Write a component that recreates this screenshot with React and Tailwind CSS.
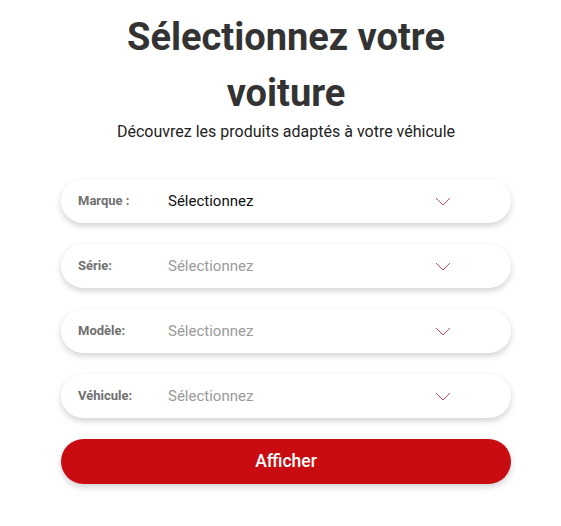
import React from 'react';

const fields = [
  { label: 'Marque :', value: 'Sélectionnez', active: true },
  { label: 'Série:', value: 'Sélectionnez' },
  { label: 'Modèle:', value: 'Sélectionnez' },
  { label: 'Véhicule:', value: 'Sélectionnez' },
];

const Chevron = () => (
  <svg width="16" height="9" viewBox="0 0 16 9" fill="none" className="shrink-0">
    <path d="M1 1l7 7 7-7" stroke="#c8364f" strokeWidth="0.9" />
  </svg>
);

export default function App() {
  return (
    <div className="min-h-[526px] bg-white" style={{ fontFamily: 'Roboto, "Liberation Sans", sans-serif' }}>
      <div className="ml-[61px] w-[450px] pt-[9px]">
        <h1 className="mx-auto w-[340px] text-center text-[38px] font-bold leading-[56px] text-[#333333]">
          Sélectionnez votre voiture
        </h1>
        <p className="text-center text-[16px] leading-[22px] text-[#222222]">
          Découvrez les produits adaptés à votre véhicule
        </p>

        <div className="mt-[36px] flex flex-col gap-[21px]">
          {fields.map((f) => (
            <div
              key={f.label}
              className="flex h-[44px] items-center rounded-full bg-white pl-[17px] pr-[60px] shadow-[0_3px_6px_rgba(0,0,0,0.18)]"
            >
              <span className="w-[90px] text-[13px] font-bold text-[#707070]">{f.label}</span>
              <span className={`flex-1 text-[15px] ${f.active ? 'text-[#111111]' : 'text-[#9a9a9a]'}`}>
                {f.value}
              </span>
              <Chevron />
            </div>
          ))}

          <button className="h-[45px] w-full rounded-full bg-[#c80c12] text-[17.5px] font-medium text-white shadow-[0_3px_6px_rgba(0,0,0,0.18)]">
            Afficher
          </button>
        </div>
      </div>
    </div>
  );
}
